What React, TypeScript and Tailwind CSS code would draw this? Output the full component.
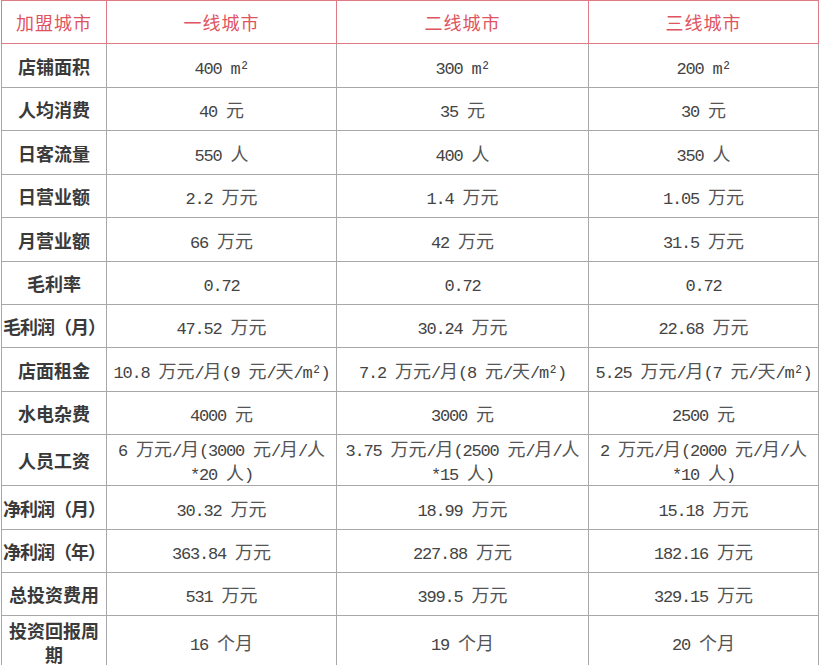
import React from "react";

const rows: [string, string, string, string][] = [
  ["店铺面积", "400 m²", "300 m²", "200 m²"],
  ["人均消费", "40 元", "35 元", "30 元"],
  ["日客流量", "550 人", "400 人", "350 人"],
  ["日营业额", "2.2 万元", "1.4 万元", "1.05 万元"],
  ["月营业额", "66 万元", "42 万元", "31.5 万元"],
  ["毛利率", "0.72", "0.72", "0.72"],
  ["毛利润（月）", "47.52 万元", "30.24 万元", "22.68 万元"],
  ["店面租金", "10.8 万元/月(9 元/天/m²)", "7.2 万元/月(8 元/天/m²)", "5.25 万元/月(7 元/天/m²)"],
  ["水电杂费", "4000 元", "3000 元", "2500 元"],
  ["人员工资", "6 万元/月(3000 元/月/人\n*20 人)", "3.75 万元/月(2500 元/月/人\n*15 人)", "2 万元/月(2000 元/月/人\n*10 人)"],
  ["净利润（月）", "30.32 万元", "18.99 万元", "15.18 万元"],
  ["净利润（年）", "363.84 万元", "227.88 万元", "182.16 万元"],
  ["总投资费用", "531 万元", "399.5 万元", "329.15 万元"],
  ["投资回报周期", "16 个月", "19 个月", "20 个月"],
];

const heights = [44, 43, 44, 43, 44, 43, 43, 44, 43, 51, 44, 43, 43, 52];

// ascii runs get a narrow mono face, the rest stays CJK
function Mixed({ text }: { text: string }) {
  const parts = text.split(/([\u0000-\u1fff]+)/).filter((p) => p !== "");
  return (
    <>
      {parts.map((p, i) =>
        /^[\u0000-\u1fff]+$/.test(p) ? (
          <span
            key={i}
            className="font-['Liberation_Mono',monospace] text-[17px] leading-[16px] tracking-[-1.2px] text-[#444] whitespace-pre"
          >
            {p}
          </span>
        ) : (
          <span key={i}>{p}</span>
        )
      )}
    </>
  );
}

export default function App() {
  return (
    <div className="w-[820px] h-[665px] overflow-hidden bg-white font-['Noto_Sans_CJK_SC',sans-serif]">
      <table className="table-fixed border-collapse w-[817px] ml-[1px]">
        <colgroup>
          <col className="w-[105px]" />
          <col className="w-[230px]" />
          <col className="w-[252px]" />
          <col className="w-[230px]" />
        </colgroup>
        <thead>
          <tr className="h-[43px]">
            {["加盟城市", "一线城市", "二线城市", "三线城市"].map((h) => (
              <th
                key={h}
                className="border border-[#e07a86] text-[18px] font-normal text-[#e0545f] text-center align-middle tracking-[1px] p-0"
              >
                {h}
              </th>
            ))}
          </tr>
        </thead>
        <tbody>
          {rows.map((r, i) => (
            <tr key={r[0]} style={{ height: heights[i] }}>
              <td
                className={`border border-[#a8a8a8] border-t-0 text-[18px] font-bold text-[#3a3a3a] text-center align-middle leading-[24px] p-0 ${
                  r[0].includes("（") ? "whitespace-nowrap tracking-[-1px]" : "px-[3px]"
                }`}
              >
                {r[0]}
              </td>
              {r.slice(1).map((c, j) => (
                <td
                  key={j}
                  className="border border-[#a8a8a8] border-t-0 text-[18px] text-[#555] text-center align-middle leading-[24px] p-0 whitespace-nowrap"
                >
                  {c.split("\n").map((line, k) => (
                    <div key={k}>
                      <Mixed text={line} />
                    </div>
                  ))}
                </td>
              ))}
            </tr>
          ))}
        </tbody>
      </table>
    </div>
  );
}
